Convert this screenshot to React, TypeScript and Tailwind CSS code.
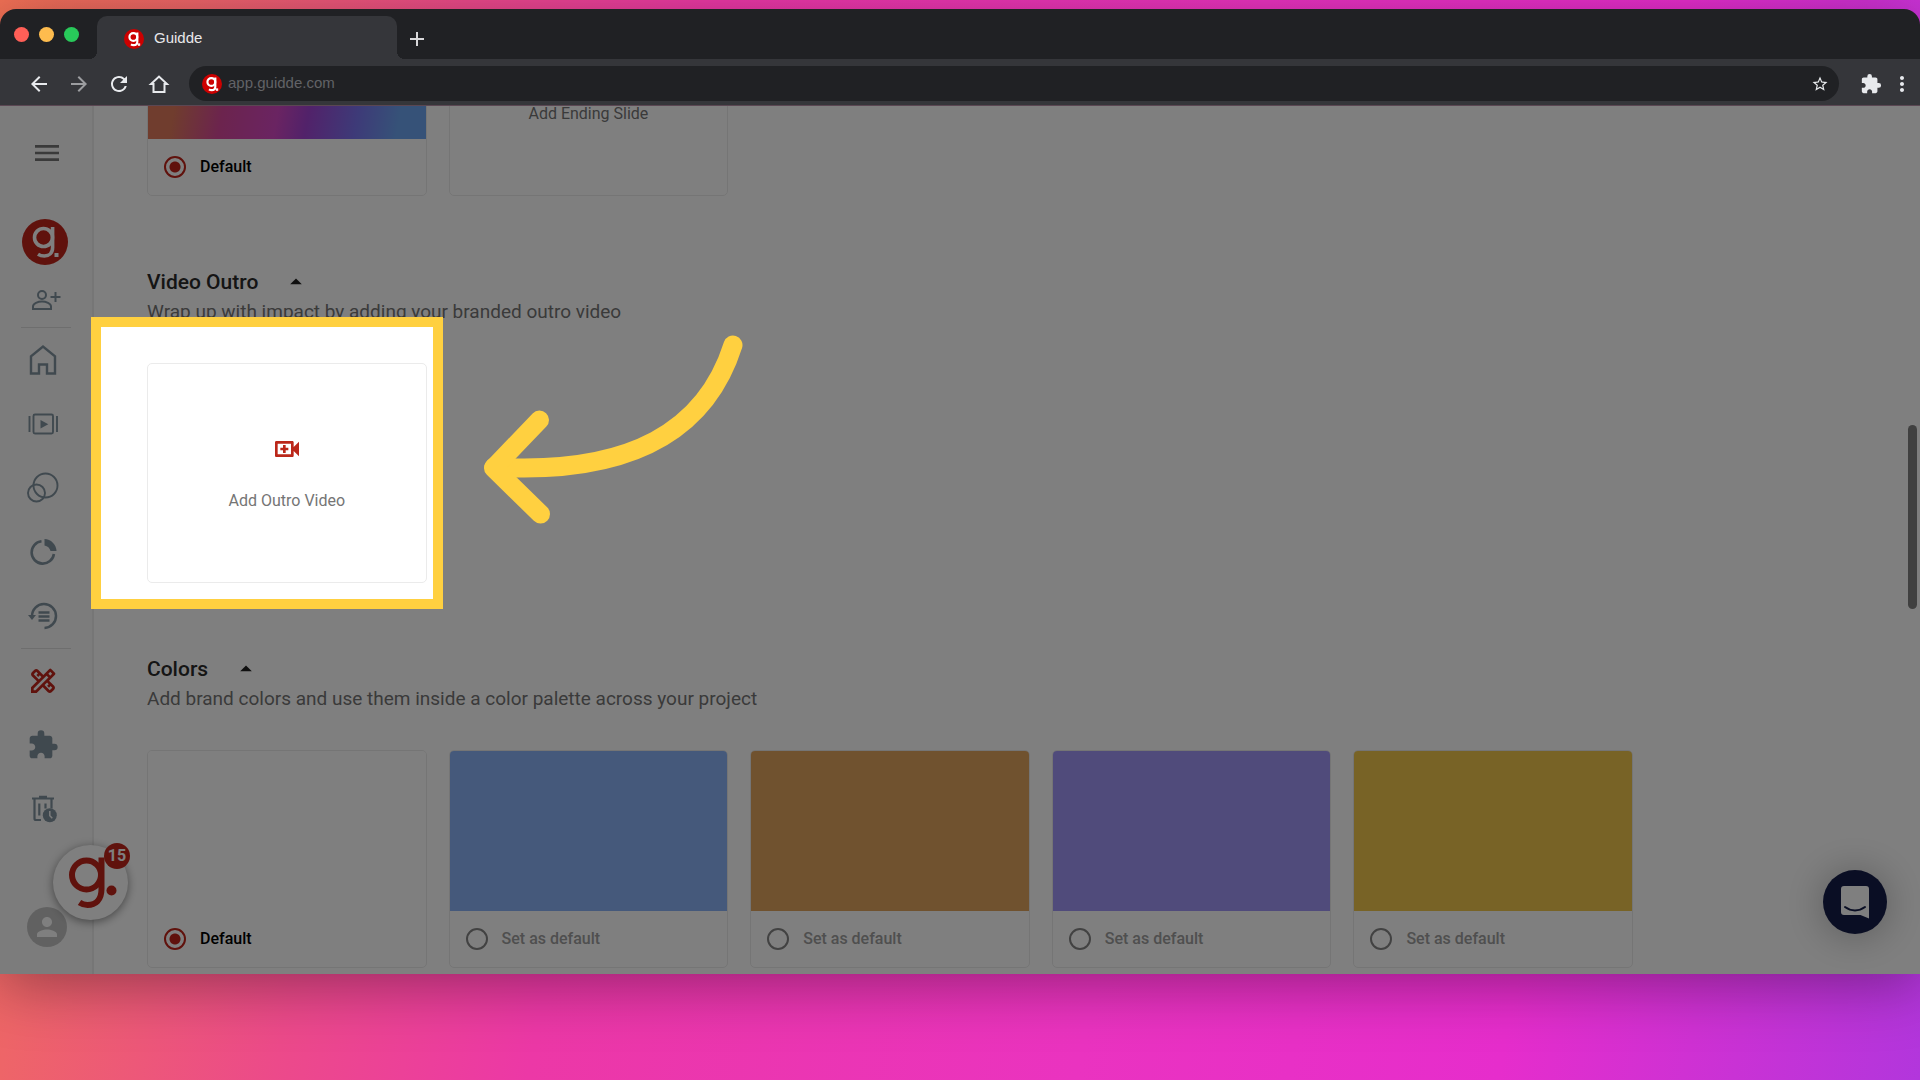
import { useState } from 'react';
import {
  MdAdd,
  MdArrowBack,
  MdArrowDropUp,
  MdArrowForward,
  MdExtension,
  MdMenu,
  MdMoreVert,
  MdOutlineDesignServices,
  MdOutlineVideoCall,
  MdPerson,
  MdRefresh,
  MdStarBorder,
} from 'react-icons/md';

type SwatchCardProps = {
  group: string;
  value: string;
  selected: string;
  onSelect: (value: string) => void;
  swatch: string;
};

const BRAND_COLORS = [
  { value: 'white', swatch: 'bg-[#fefefe]' },
  { value: 'blue', swatch: 'bg-[#8ab2f6]' },
  { value: 'orange', swatch: 'bg-[#e0a45e]' },
  { value: 'purple', swatch: 'bg-[#a096f6]' },
  { value: 'yellow', swatch: 'bg-[#f0c64c]' },
];

function LogoMark({ className, weight = 3.6 }: { className: string; weight?: number }) {
  return (
    <svg viewBox="0 0 46 46" className={className} fill="none" stroke="currentColor" strokeWidth={weight}>
      <circle cx="21.5" cy="18.5" r="9" />
      <path d="M30.6 8v20.500c0 5.500-3.400 8.500-8.200 8.500-2.600 0-4.600-.6-6.400-1.800" />
      <rect x="32.500" y="34" width="4" height="4" fill="currentColor" strokeWidth={weight - 3.6} />
    </svg>
  );
}

function InviteIcon() {
  return (
    <svg width="30" height="24" viewBox="0 0 30 24" fill="none" stroke="currentColor" strokeWidth="2">
      <circle cx="11" cy="7" r="4" />
      <path d="M2 21v-2.500C2 15.500 7 13.500 11 13.500s9 2 9 5V21z" />
      <path d="M24.500 4v10M19.500 9h10" />
    </svg>
  );
}

function HomeIcon() {
  return (
    <svg width="32" height="32" viewBox="0 0 32 32" fill="none" stroke="currentColor" strokeWidth="2.400">
      <path d="M4 29.500V12.300L16 2.600l12 9.700v17.200h-8v-9h-8v9z" />
    </svg>
  );
}

function VideosIcon() {
  return (
    <svg width="32" height="32" viewBox="0 0 32 32" fill="none" stroke="currentColor" strokeWidth="1.900">
      <rect x="6.500" y="6.500" width="19.500" height="19" rx="1.500" />
      <path d="M2.500 8v16M30 8v16" />
      <path d="M13.500 12v8.400l7.800-4.200z" fill="currentColor" stroke="none" />
    </svg>
  );
}

function CirclesIcon() {
  return (
    <svg width="32" height="32" viewBox="0 0 32 32" fill="none" stroke="currentColor" strokeWidth="1.900">
      <circle cx="18.500" cy="13.500" r="12" />
      <circle cx="9.500" cy="21" r="8.500" />
    </svg>
  );
}

function ChartIcon() {
  return (
    <svg width="32" height="32" viewBox="0 0 32 32" fill="none" stroke="currentColor">
      <path d="M14.500 5.300A11.200 11.200 0 1 0 26.900 18" strokeWidth="2.600" />
      <path d="M17.500 3a12.500 12.500 0 0 1 12 12h-6a7.500 7.500 0 0 0-6-5.500z" fill="currentColor" stroke="none" />
    </svg>
  );
}

function HistoryIcon() {
  return (
    <svg width="32" height="32" viewBox="0 0 32 32" fill="none" stroke="currentColor" strokeWidth="2.500">
      <path d="M5 16A12 12 0 1 1 17.500 28" />
      <path d="M1 15h8l-4 5z" fill="currentColor" stroke="none" />
      <path d="M11.500 12.500h11M11.500 16.500h11M11.500 20.500h11" strokeWidth="2.300" />
    </svg>
  );
}

function TrashIcon() {
  return (
    <svg width="32" height="32" viewBox="0 0 32 32" fill="none" stroke="currentColor" strokeWidth="2.200">
      <path d="M5 5.500h22M12 3.800h8" />
      <path d="M7.500 6v19.500q0 1.500 1.500 1.500h5M24.500 6v9.500M12.300 10.500v12M18.500 10.500v5" />
      <circle cx="22.800" cy="22.300" r="7" fill="currentColor" stroke="none" />
      <path d="M22.800 18v4.800l2.500 2.500" stroke="#f8f8f8" strokeWidth="1.500" />
    </svg>
  );
}

const PRIMARY_NAV = [
  { label: 'Home', icon: <HomeIcon /> },
  { label: 'Videos', icon: <VideosIcon /> },
  { label: 'Spaces', icon: <CirclesIcon /> },
  { label: 'Insights', icon: <ChartIcon /> },
  { label: 'History', icon: <HistoryIcon /> },
];

const SECONDARY_NAV = [
  { label: 'Brand kit', icon: <MdOutlineDesignServices size={32} />, color: 'text-[#c0251a]' },
  { label: 'Integrations', icon: <MdExtension size={32} />, color: 'text-[#80939f]' },
  { label: 'Trash', icon: <TrashIcon />, color: 'text-[#80939f]' },
];

function Favicon() {
  return (
    <span className="flex size-5 shrink-0 items-center justify-center rounded-full bg-[#cc0000] text-white">
      <LogoMark className="size-5" weight={5} />
    </span>
  );
}

function BrowserChrome() {
  return (
    <header className="shrink-0 font-['Liberation_Sans',sans-serif] text-[15px]">
      <div className="flex h-[50px] items-end bg-[#202124]">
        <div className="flex h-[50px] w-[89px] items-center gap-[10px] pl-[14px]">
          <span className="size-[15px] rounded-full bg-[#ff5f57]" />
          <span className="size-[15px] rounded-full bg-[#febc4e]" />
          <span className="size-[15px] rounded-full bg-[#28c95a]" />
        </div>
        <span className="size-2 bg-[radial-gradient(circle_at_0_0,#202124_8px,#35363a_8px)]" />
        <div className="flex h-[43px] w-[300px] items-center gap-[10px] rounded-t-[10px] bg-[#35363a] pt-[2px] pl-[27px] text-[#e8e8ea]">
          <Favicon />
          <span>Guidde</span>
        </div>
        <span className="size-2 bg-[radial-gradient(circle_at_100%_0,#202124_8px,#35363a_8px)]" />
        <button aria-label="New tab" className="flex h-10 w-6 items-center justify-center text-[#d8d8da]">
          <MdAdd size={24} />
        </button>
      </div>
      <div className="flex h-[47px] items-center border-b border-[#5b4753] bg-[#35363a] pt-[3px] pr-[6px] text-[#e8eaed]">
        <div className="flex w-[189px] items-center gap-4 pl-[27px]">
          <button aria-label="Back"><MdArrowBack size={24} /></button>
          <button aria-label="Forward" className="text-[#9c9da0]"><MdArrowForward size={24} /></button>
          <button aria-label="Reload"><MdRefresh size={24} /></button>
          <button aria-label="Home page">
            <svg width="24" height="24" viewBox="0 0 24 24" fill="none" stroke="currentColor" strokeWidth="2">
              <path d="M6.500 12v8h11v-8H20L12 4.500 4 12z" />
            </svg>
          </button>
        </div>
        <div className="flex h-[35px] flex-1 items-center gap-[6px] rounded-full bg-[#202124] pr-[10px] pl-[13px]">
          <Favicon />
          <input
            type="text"
            aria-label="Address"
            defaultValue="app.guidde.com"
            className="min-w-0 flex-1 bg-transparent text-[#626367] outline-none"
          />
          <button aria-label="Bookmark"><MdStarBorder size={18} /></button>
        </div>
        <button aria-label="Extensions" className="ml-[21px]"><MdExtension size={22} /></button>
        <button aria-label="Browser menu" className="ml-2"><MdMoreVert size={24} /></button>
      </div>
    </header>
  );
}

function Sidebar() {
  return (
    <aside className="relative flex w-[94px] shrink-0 flex-col border-r-2 border-[#ececec] bg-[#f8f8f8] text-[#80939f]">
      <button aria-label="Menu" className="mt-[31px] ml-[31px] size-8 text-[#757575]">
        <MdMenu size={32} />
      </button>
      <a href="#" aria-label="Workspace" className="mt-[50px] ml-[22px] block size-[46px] rounded-full bg-[#c0251a] text-white">
        <LogoMark className="size-[46px]" />
      </a>
      <button aria-label="Invite people" className="mt-[23px] ml-[31px] h-6 w-[30px]">
        <InviteIcon />
      </button>
      <hr className="mt-[15px] ml-[21px] w-[50px] border-[#dcdcdc]" />
      <nav className="w-[86px]">
        {PRIMARY_NAV.map((item) => (
          <a key={item.label} href="#" aria-label={item.label} className="flex h-16 items-center justify-center">
            {item.icon}
          </a>
        ))}
        <hr className="ml-[21px] w-[50px] border-[#dcdcdc]" />
        {SECONDARY_NAV.map((item) => (
          <a key={item.label} href="#" aria-label={item.label} className={`flex h-16 items-center justify-center ${item.color}`}>
            {item.icon}
          </a>
        ))}
      </nav>
      <button
        aria-label="Account"
        className="mt-auto mb-[27px] ml-[27px] flex size-10 items-center justify-center rounded-full bg-[#c3c3c3] text-white"
      >
        <MdPerson size={30} />
      </button>

      {/* floating recorder widget */}
      <button
        aria-label="Open recorder"
        className="absolute bottom-[54px] left-[53px] z-10 size-[75px] rounded-full bg-white text-[#c0251a] shadow-[0_2px_10px_rgba(0,0,0,0.45)]"
      >
        <svg viewBox="0 0 75 75" className="size-[75px]" fill="none" stroke="currentColor" strokeWidth="6">
          <circle cx="33.500" cy="30" r="14.500" />
          <path d="M48.500 12.500V44c0 11-6 16-14 16-3 0-5.500-.8-8-2.500" />
          <circle cx="58.500" cy="45.500" r="5" fill="currentColor" stroke="none" />
        </svg>
        <span className="absolute -top-[2px] -right-[2px] flex size-[26px] items-center justify-center rounded-full bg-[#c0251a] text-base font-bold text-white">
          15
        </span>
      </button>
    </aside>
  );
}

function SwatchCard({ group, value, selected, onSelect, swatch }: SwatchCardProps) {
  const checked = selected === value;
  return (
    <div className="overflow-hidden rounded-[5px] border border-[#ebebeb]">
      <div className={`h-40 ${swatch}`} />
      <label
        className={`flex h-14 items-center gap-[14px] pl-4 text-base font-medium ${checked ? 'text-black' : 'text-[#9e9e9e]'}`}
      >
        <input
          type="radio"
          name={group}
          value={value}
          checked={checked}
          onChange={() => onSelect(value)}
          className="size-[22px] appearance-none rounded-full border-2 border-[#858585] checked:border-[#c0251a] checked:bg-[radial-gradient(circle,#c0251a_5px,transparent_6px)]"
        />
        {checked ? 'Default' : 'Set as default'}
      </label>
    </div>
  );
}

function AddCard({ label }: { label: string }) {
  return (
    <button className="flex h-[220px] w-full flex-col items-center rounded-[5px] border border-[#ebebeb] pt-[69px] text-base text-[#757575]">
      <MdOutlineVideoCall size={32} className="text-[#bb271a]" />
      <span className="mt-[26px] leading-5">{label}</span>
    </button>
  );
}

function SectionHeading({ title, subtitle }: { title: string; subtitle: string }) {
  return (
    <div className="mt-[72px] mb-[39px]">
      <div className="flex items-center gap-6">
        <h2 className="text-[21px] leading-7 font-medium text-[#2a2a2a]">{title}</h2>
        <button aria-label={`Collapse ${title}`} className="text-[#202020]">
          <MdArrowDropUp size={28} />
        </button>
      </div>
      <p className="mt-1 text-[19px] leading-6 text-[#757575]">{subtitle}</p>
    </div>
  );
}

function PointerArrow() {
  return (
    <svg
      viewBox="480 330 270 200"
      className="pointer-events-none absolute -top-[33px] left-[333px] z-30 h-[200px] w-[270px]"
      fill="none"
      stroke="#ffd040"
      strokeWidth="19"
      strokeLinecap="round"
      strokeLinejoin="round"
    >
      <path d="M733 345C706 430 632 475 494 467" />
      <path d="M539.500 420L493.500 468L540.500 514" />
    </svg>
  );
}

export default function App() {
  const [ending, setEnding] = useState('gradient');
  const [color, setColor] = useState('white');

  return (
    <div className="flex h-screen flex-col bg-[linear-gradient(100deg,#f07055_0%,#ee6568_9%,#ec4a8a_22%,#ec38a6_34%,#ea33c0_60%,#e62dcc_80%,#b236dc_100%)] pt-[9px] pb-[106px] font-['Roboto',sans-serif]">
      <div className="flex min-h-0 flex-1 flex-col overflow-hidden rounded-t-2xl shadow-[0_12px_60px_rgba(0,0,0,0.35)]">
        <BrowserChrome />
        <div className="relative flex min-h-0 flex-1 overflow-hidden bg-white">
          <Sidebar />
          <main className="min-w-0 flex-1 pr-4 pl-[53px]">
            {/* scrolled part way down, so the first row starts above the fold */}
            <div className="-mt-[130px] grid max-w-[1486px] grid-cols-5 items-end gap-[22px]">
              <SwatchCard
                group="ending"
                value="gradient"
                selected={ending}
                onSelect={setEnding}
                swatch="bg-[linear-gradient(100deg,#e07a5c_16%,#d8489c_32%,#d548c4_50%,#a444d4_60%,#7c74f0_76%,#6ca4f0_90%)]"
              />
              <AddCard label="Add Ending Slide" />
            </div>

            <SectionHeading title="Video Outro" subtitle="Wrap up with impact by adding your branded outro video" />
            <div className="grid max-w-[1486px] grid-cols-5 gap-[22px]">
              <div className="relative">
                <AddCard label="Add Outro Video" />
                <div className="pointer-events-none absolute -inset-x-4 -top-[46px] -bottom-[26px] z-20 -ml-10 border-10 border-[#ffd040] shadow-[0_0_0_4000px_rgba(0,0,0,0.5)]" />
                <PointerArrow />
              </div>
            </div>

            <SectionHeading title="Colors" subtitle="Add brand colors and use them inside a color palette across your project" />
            <div className="grid max-w-[1486px] grid-cols-5 gap-[22px]">
              {BRAND_COLORS.map((item) => (
                <SwatchCard
                  key={item.value}
                  group="color"
                  value={item.value}
                  selected={color}
                  onSelect={setColor}
                  swatch={item.swatch}
                />
              ))}
            </div>
          </main>

          <div className="absolute top-[319px] right-[3px] z-10 h-[184px] w-[9px] rounded-full bg-[#808080]" />
          <button
            aria-label="Open chat"
            className="absolute right-[33px] bottom-10 z-10 flex size-16 items-center justify-center rounded-full bg-[#141c48] shadow-[0_2px_40px_rgba(0,0,0,0.3)]"
          >
            <svg width="32" height="36" viewBox="0 0 32 36" fill="none">
              <path d="M5 2h22a3 3 0 0 1 3 3v29.500L21.500 31H5a3 3 0 0 1-3-3V5a3 3 0 0 1 3-3z" fill="#fff" />
              <path d="M6 23c6 4.500 14 4.500 20 0" stroke="#141c48" strokeWidth="2" strokeLinecap="round" />
            </svg>
          </button>
        </div>
      </div>
    </div>
  );
}
